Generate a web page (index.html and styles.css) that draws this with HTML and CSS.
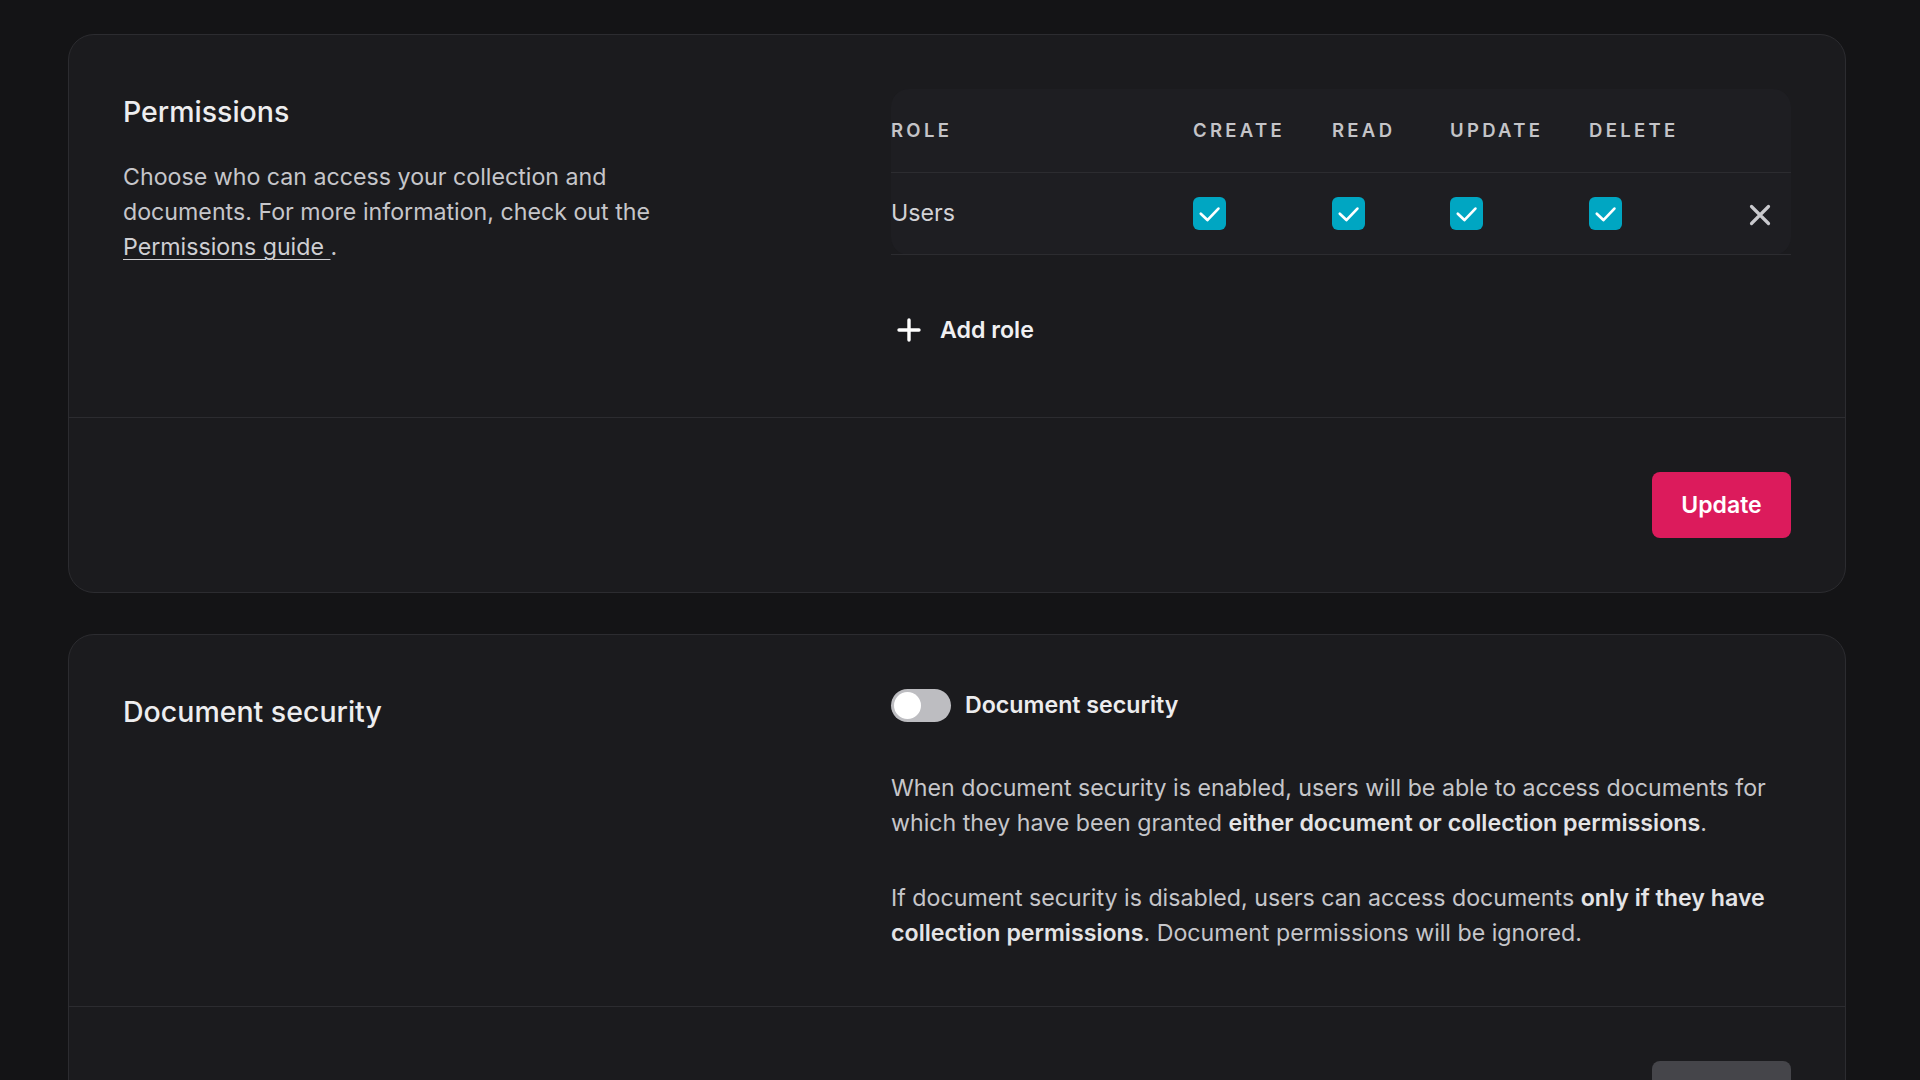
FILE: index.html
```html
<!DOCTYPE html>
<html lang="en">
<head>
<meta charset="utf-8">
<title>Permissions</title>
<link rel="stylesheet" href="styles.css">
</head>
<body>
<main class="page">
  <section class="card">
    <div class="card-body">
      <div class="card-left">
        <h2 class="card-title">Permissions</h2>
        <p class="card-desc">Choose who can access your collection and documents. For more information, check out the <a class="link" href="#">Permissions guide </a>.</p>
      </div>
      <div class="card-right">
        <div class="perm-table">
          <div class="perm-row perm-head">
            <div class="cell">ROLE</div>
            <div class="cell">CREATE</div>
            <div class="cell">READ</div>
            <div class="cell">UPDATE</div>
            <div class="cell">DELETE</div>
            <div class="cell"></div>
          </div>
          <div class="perm-row perm-body">
            <div class="cell role">Users</div>
            <div class="cell"><span class="check"><svg viewBox="0 0 33 33" width="33" height="33"><path d="M7.8 16.8l6.6 6.3L25.4 11.6" fill="none" stroke="#fff" stroke-width="2.7" stroke-linecap="round" stroke-linejoin="round"/></svg></span></div>
            <div class="cell"><span class="check"><svg viewBox="0 0 33 33" width="33" height="33"><path d="M7.8 16.8l6.6 6.3L25.4 11.6" fill="none" stroke="#fff" stroke-width="2.7" stroke-linecap="round" stroke-linejoin="round"/></svg></span></div>
            <div class="cell"><span class="check"><svg viewBox="0 0 33 33" width="33" height="33"><path d="M7.8 16.8l6.6 6.3L25.4 11.6" fill="none" stroke="#fff" stroke-width="2.7" stroke-linecap="round" stroke-linejoin="round"/></svg></span></div>
            <div class="cell"><span class="check"><svg viewBox="0 0 33 33" width="33" height="33"><path d="M7.8 16.8l6.6 6.3L25.4 11.6" fill="none" stroke="#fff" stroke-width="2.7" stroke-linecap="round" stroke-linejoin="round"/></svg></span></div>
            <div class="cell remove"><svg viewBox="0 0 22 22" width="22" height="22"><path d="M2.5 2.5L19.5 19.5M19.5 2.5L2.5 19.5" stroke="#c9c9cd" stroke-width="3.2" stroke-linecap="round"/></svg></div>
          </div>
        </div>
        <button class="add-role" type="button">
          <svg viewBox="0 0 24 24" width="24" height="24"><path d="M12 2v20M2 12h20" stroke="#fff" stroke-width="3.4" stroke-linecap="round"/></svg>
          <span>Add role</span>
        </button>
      </div>
    </div>
    <div class="card-footer">
      <button class="btn btn-primary" type="button">Update</button>
    </div>
  </section>

  <section class="card">
    <div class="card-body">
      <div class="card-left">
        <h2 class="card-title">Document security</h2>
      </div>
      <div class="card-right">
        <label class="toggle-row">
          <span class="toggle"><span class="knob"></span></span>
          <span class="toggle-label">Document security</span>
        </label>
        <p class="info first">When document security is enabled, users will be able to access documents for which they have been granted <b>either document or collection permissions</b>.</p>
        <p class="info">If document security is disabled, users can access documents <b>only if they have collection permissions</b>. Document permissions will be ignored.</p>
      </div>
    </div>
    <div class="card-footer">
      <button class="btn btn-disabled" type="button">Update</button>
    </div>
  </section>
</main>
</body>
</html>
```

FILE: styles.css
```css
* { box-sizing: border-box; }

html, body {
  margin: 0;
  padding: 0;
  background: #141416;
}

body {
  font-family: Inter, "Noto Sans", sans-serif;
  color: #c6c6ca;
  font-size: 23.2px;
  line-height: 35px;
}

.page {
  padding: 34px 74px 40px 68px;
  display: flex;
  flex-direction: column;
  gap: 41px;
}

.card {
  background: #1b1b1e;
  border: 1px solid #2c2c30;
  border-radius: 26px;
}

.card-body {
  display: grid;
  grid-template-columns: 1fr 900px;
  padding: 54px 54px 55px 54px;
  border-bottom: 1px solid #2c2c30;
}

.card-title {
  margin: 0;
  font-size: 28.5px;
  line-height: 45px;
  font-weight: 500;
  color: #ededef;
}

.card-desc {
  margin: 26px 0 0;
  max-width: 580px;
}

.link {
  color: #cfcfd3;
  text-decoration: underline;
  text-underline-offset: 4px;
  text-decoration-thickness: 1px;
}

.perm-table {
  background: #1e1e22;
  border-radius: 18px;
}

.perm-row {
  display: grid;
  grid-template-columns: 302px 139px 118px 139px 1fr 62px;
  align-items: center;
  border-bottom: 1px solid #2c2c30;
}

.perm-head {
  height: 84px;
  font-size: 18.5px;
  font-weight: 600;
  letter-spacing: 3.3px;
  color: #c4c4c8;
}

.perm-body {
  height: 82px;
}

.role {
  color: #d2d2d6;
}

.check {
  display: block;
  width: 33px;
  height: 33px;
  background: #00a6c2;
  border-radius: 6px;
}

.check svg { display: block; }

.remove {
  display: flex;
  justify-content: center;
  padding-top: 2px;
}

.remove svg { display: block; }

.add-role {
  margin-top: 42px;
  height: 65px;
  display: flex;
  align-items: center;
  gap: 19px;
  padding: 0 0 0 6px;
  background: none;
  border: 0;
  font-family: inherit;
  font-size: 23.2px;
  font-weight: 600;
  color: #f0f0f2;
  cursor: pointer;
}

.add-role svg { display: block; }

.card-footer {
  display: flex;
  justify-content: flex-end;
  padding: 54px 54px 54px 54px;
}

.btn {
  height: 66px;
  width: 139px;
  border: 0;
  border-radius: 8px;
  font-family: inherit;
  font-size: 23px;
  font-weight: 600;
}

.btn-primary {
  background: #dc1b5c;
  color: #ffffff;
}

.btn-disabled {
  background: #45454a;
  color: #88888c;
}

.toggle-row {
  display: flex;
  align-items: center;
  gap: 14px;
  height: 33px;
}

.toggle {
  position: relative;
  width: 60px;
  height: 33px;
  border-radius: 17px;
  background: #bdbdc1;
}

.knob {
  position: absolute;
  left: 3px;
  top: 3px;
  width: 27px;
  height: 27px;
  border-radius: 50%;
  background: #ffffff;
}

.toggle-label {
  font-weight: 600;
  color: #ececee;
}

.info {
  margin: 40px 0 0;
}

.info.first {
  margin-top: 49px;
}

.info b {
  font-weight: 600;
  color: #e4e4e6;
}
```
